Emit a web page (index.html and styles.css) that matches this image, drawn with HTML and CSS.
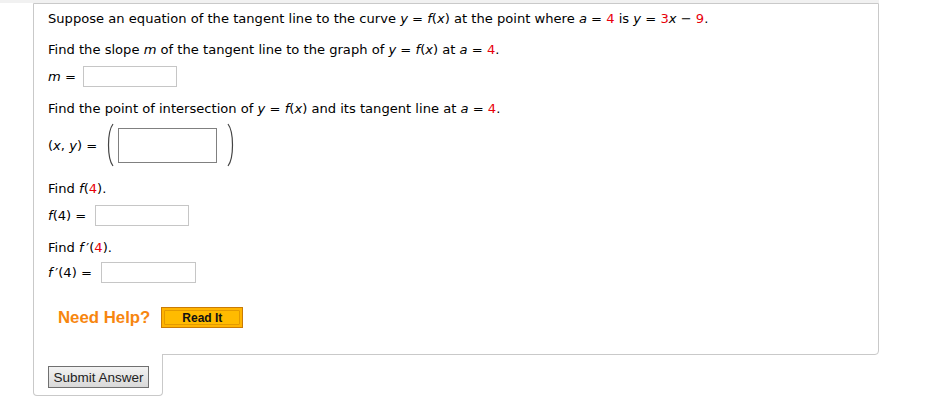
FILE: index.html
```html
<!DOCTYPE html>
<html>
<head>
<meta charset="utf-8">
<link rel="stylesheet" href="styles.css">
</head>
<body>
<div class="strip"></div>
<div class="wrap">
  <div class="panel">
    <p class="q q1">Suppose an equation of the tangent line to the curve <i>y</i> = <i>f</i>(<i>x</i>) at the point where <i>a</i> = <span class="r">4</span> is <i>y</i> = <span class="r">3</span><i>x</i> &minus; <span class="r">9</span>.</p>
    <p class="q q2">Find the slope <i>m</i> of the tangent line to the graph of <i>y</i> = <i>f</i>(<i>x</i>) at <i>a</i> = <span class="r">4</span>.</p>
    <div class="row r-m"><span class="lbl"><i>m</i> = </span><span class="inp"></span></div>
    <p class="q q3">Find the point of intersection of <i>y</i> = <i>f</i>(<i>x</i>) and its tangent line at <i>a</i> = <span class="r">4</span>.</p>
    <div class="row r-xy">
      <span class="lbl">(<i>x</i>, <i>y</i>) = </span>
      <svg class="paren" width="10" height="44" viewBox="0 0 10 44"><path d="M8 1 C2 9 2 35 8 43" fill="none" stroke="#444" stroke-width="1.2"/></svg>
      <span class="inp big"></span>
      <svg class="paren pr" width="10" height="44" viewBox="0 0 10 44"><path d="M2 1 C8 9 8 35 2 43" fill="none" stroke="#444" stroke-width="1.2"/></svg>
    </div>
    <p class="q q4">Find <i>f</i>(<span class="r">4</span>).</p>
    <div class="row r-f"><span class="lbl"><i>f</i>(4) = </span><span class="inp"></span></div>
    <p class="q q5">Find <i>f</i>&thinsp;′(<span class="r">4</span>).</p>
    <div class="row r-fp"><span class="lbl"><i>f</i>&thinsp;′(4) = </span><span class="inp"></span></div>
    <div class="help">
      <span class="need">Need Help?</span>
      <span class="readit"><span class="readit-in">Read It</span></span>
    </div>
  </div>
  <div class="tab">
    <button class="submit">Submit Answer</button>
  </div>
</div>
</body>
</html>
```
FILE: styles.css
```css
html, body { margin: 0; padding: 0; background: #fff; }
body { font-family: "DejaVu Sans", Verdana, sans-serif; font-size: 13.1px; color: #000; }
.strip { height: 3px; background: #f1f1f1; width: 879px; }
.wrap { margin-left: 33px; width: 846px; }
.panel {
  border: 1px solid #c9c9c9;
  border-radius: 0 0 4px 0;
  padding: 5px 14px 0 14px;
  height: 352px;
  box-sizing: border-box;
}
.q { margin: 0; line-height: 20px; white-space: nowrap; }
.q i, .lbl i { font-style: italic; }
.r { color: #e8000b; }
.q2 { margin-top: 11px; }
.row { display: flex; align-items: center; }
.r-m { margin-top: 6px; height: 21px; }
.q3 { margin-top: 12px; }
.r-xy { margin-top: 5px; height: 42px; }
.q4 { margin-top: 13px; }
.r-f { margin-top: 6px; height: 21px; }
.q5 { margin-top: 12px; }
.r-fp { margin-top: 4px; height: 21px; }
.lbl { white-space: pre; }
.inp { display: inline-block; border: 1px solid #c6c6c6; height: 19px; width: 92px; box-sizing: content-box; background: #fff; }
.r-m .inp { margin-left: 3px; }
.r-f .inp { margin-left: 5px; }
.r-fp .inp { margin-left: 5px; width: 93px; }
.paren { display: block; margin-left: 4px; }
.big { border-color: #808080; width: 97px; height: 33px; margin-left: 3px; }
.pr { margin-left: 9px; }
.help { display: flex; align-items: center; margin-top: 24px; margin-left: 10px; height: 21px; }
.need { font-family: "Liberation Sans", Arial, sans-serif; font-weight: bold; font-size: 16.8px; color: #f7860f; }
.readit {
  margin-left: 11px;
  display: inline-block;
  width: 80px; height: 19px;
  border: 1px solid #c97b06;
  background: #ffb400;
  box-sizing: content-box;
  padding: 0;
}
.readit-in {
  display: flex; align-items: center; justify-content: center;
  margin: 2px; height: 13px;
  border: 1px solid #e39a00;
  border-radius: 1px;
  font-family: "Liberation Sans", Arial, sans-serif; font-weight: bold; font-size: 12px; color: #111;
  background: #ffbb00;
}
.tab {
  margin-top: -1px;
  width: 130px;
  height: 42px;
  border: 1px solid #c9c9c9;
  border-top: none;
  border-radius: 0 0 4px 4px;
  background: #fff;
  padding: 12px 0 0 14px;
  box-sizing: border-box;
}
.submit {
  display: block;
  width: 101px; height: 22px;
  padding: 0;
  border: 1px solid #707070;
  border-radius: 0;
  background: linear-gradient(#f2f2f2, #d9d9d9);
  font-family: "Liberation Sans", Arial, sans-serif; font-size: 13.5px; color: #222;
}
```
